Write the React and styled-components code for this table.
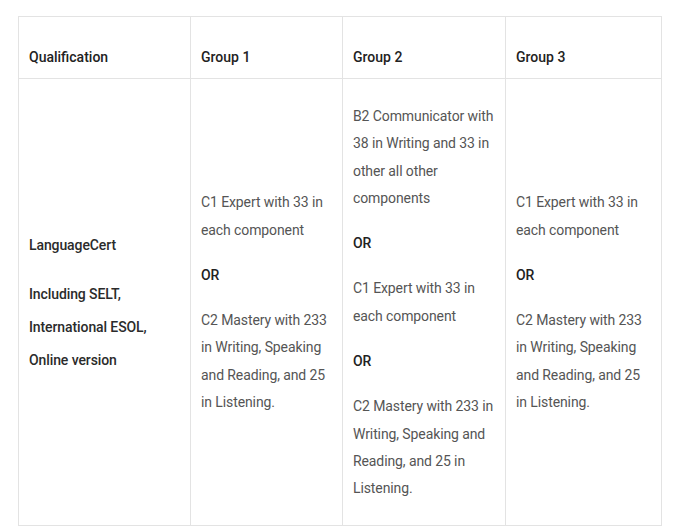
import React from 'react';
import styled, { createGlobalStyle } from 'styled-components';

const GlobalStyle = createGlobalStyle`
  body {
    margin: 0;
    background: #fff;
    font-family: Roboto, "Liberation Sans", Arial, sans-serif;
  }
`;

const Page = styled.div`
  padding: 16px 12px 0 18px;
`;

const Table = styled.table`
  width: 643px;
  border-collapse: collapse;
  table-layout: fixed;
`;

const HeadCell = styled.th`
  border: 1px solid #e3e3e3;
  padding: 27px 10px 7px;
  text-align: left;
  font-size: 14px;
  font-weight: 500;
  line-height: 27px;
  color: #222;
`;

const Cell = styled.td`
  border: 1px solid #e3e3e3;
  padding: 24px 10px 22px;
  vertical-align: middle;
  font-size: 14px;
  line-height: 27.3px;
  letter-spacing: -0.1px;
  color: ${(p) => (p.$strong ? '#2b2b2b' : '#555')};
  font-weight: ${(p) => (p.$strong ? 500 : 400)};
`;

const Para = styled.p`
  margin: 0 0 ${(p) => p.$gap || 18}px;
  line-height: ${(p) => p.$lh || 'inherit'};
  white-space: nowrap;
  &:last-child {
    margin-bottom: 0;
  }
`;

const Or = styled(Para)`
  font-weight: 500;
  color: #222;
`;

const Lines = ({ lines }) =>
  lines.map((l, i) => (
    <React.Fragment key={i}>
      {l}
      {i < lines.length - 1 && <br />}
    </React.Fragment>
  ));

const c1 = ['C1 Expert with 33 in', 'each component'];
const c2 = ['C2 Mastery with 233', 'in Writing, Speaking', 'and Reading, and 25', 'in Listening.'];

const GroupOption = ({ blocks }) =>
  blocks.map((b, i) =>
    b === 'OR' ? (
      <Or key={i}>OR</Or>
    ) : (
      <Para key={i}>
        <Lines lines={b} />
      </Para>
    )
  );

export default function App() {
  return (
    <Page>
      <GlobalStyle />
      <Table>
        <colgroup>
          <col style={{ width: 172 }} />
          <col style={{ width: 152 }} />
          <col style={{ width: 163 }} />
          <col style={{ width: 156 }} />
        </colgroup>
        <thead>
          <tr>
            <HeadCell>Qualification</HeadCell>
            <HeadCell>Group 1</HeadCell>
            <HeadCell>Group 2</HeadCell>
            <HeadCell>Group 3</HeadCell>
          </tr>
        </thead>
        <tbody>
          <tr>
            <Cell $strong>
              <Para $gap={16} $lh="33px">LanguageCert</Para>
              <Para $lh="33px">
                <Lines lines={['Including SELT,', 'International ESOL,', 'Online version']} />
              </Para>
            </Cell>
            <Cell>
              <GroupOption blocks={[c1, 'OR', c2]} />
            </Cell>
            <Cell>
              <GroupOption
                blocks={[
                  ['B2 Communicator with', '38 in Writing and 33 in', 'other all other', 'components'],
                  'OR',
                  c1,
                  'OR',
                  ['C2 Mastery with 233 in', 'Writing, Speaking and', 'Reading, and 25 in', 'Listening.'],
                ]}
              />
            </Cell>
            <Cell>
              <GroupOption blocks={[c1, 'OR', c2]} />
            </Cell>
          </tr>
        </tbody>
      </Table>
    </Page>
  );
}
